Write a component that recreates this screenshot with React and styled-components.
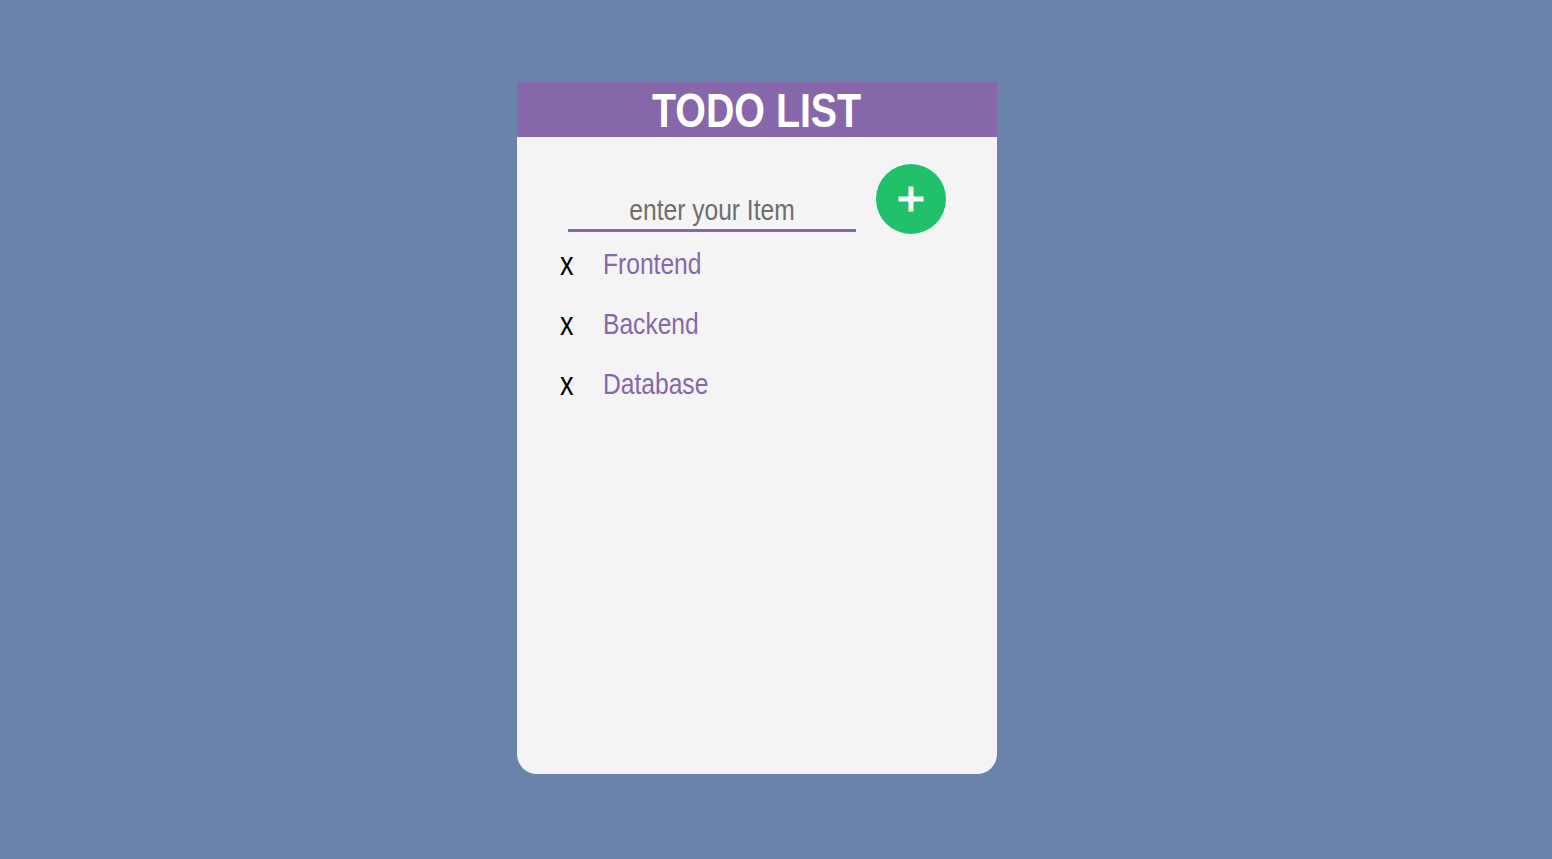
import React, { useState } from "react";
import styled, { createGlobalStyle } from "styled-components";

const NARROW = 0.82;

const Global = createGlobalStyle`
  html, body { margin: 0; padding: 0; }
  body {
    background: #6a83ab;
    font-family: "Liberation Sans", Arial, sans-serif;
    min-height: 859px;
  }
`;

const Page = styled.div`
  display: flex;
  justify-content: center;
  padding: 82px 38px 0 0;
`;

const Card = styled.div`
  width: 480px;
  height: 692px;
  background: #f4f4f4;
  border-radius: 0 0 20px 20px;
  overflow: hidden;
  display: flex;
  flex-direction: column;
`;

const Narrow = styled.span`
  display: inline-block;
  transform: scaleX(${NARROW});
  transform-origin: ${(p) => p.$origin || "left"} center;
  white-space: nowrap;
`;

const Header = styled.h1`
  margin: 0;
  height: 55px;
  background: #8667aa;
  color: #fff;
  font-size: 48px;
  font-weight: 700;
  line-height: 53px;
  text-align: center;
  padding-top: 2px;
  box-sizing: border-box;
`;

const Body = styled.div`
  display: flex;
  flex-direction: column;
  padding: 27px 0 0 43px;
`;

const InputRow = styled.div`
  display: flex;
  align-items: flex-start;
  gap: 20px;
  padding-left: 8px;
`;

const InputBox = styled.div`
  width: 288px;
  height: 39px;
  margin-top: 29px;
  border-bottom: 3px solid #8667aa;
  box-sizing: border-box;
  overflow: visible;
`;

const Input = styled.input`
  display: block;
  width: ${288 / NARROW}px;
  height: 33px;
  border: none;
  background: transparent;
  font-family: "Liberation Sans", Arial, sans-serif;
  font-size: 30px;
  color: #6b6b6b;
  text-align: center;
  outline: none;
  padding: 0;
  transform: scaleX(${NARROW});
  transform-origin: left center;
  &::placeholder { color: #6e6e6e; opacity: 1; }
`;

const AddButton = styled.button`
  width: 70px;
  height: 70px;
  border-radius: 50%;
  border: none;
  background: #21c06b;
  color: #fff;
  display: flex;
  align-items: center;
  justify-content: center;
  padding: 0;
  cursor: pointer;
  flex-shrink: 0;
`;

const List = styled.ul`
  list-style: none;
  margin: 0;
  padding: 0;
  display: flex;
  flex-direction: column;
`;

const Item = styled.li`
  display: flex;
  align-items: center;
  height: 60px;
`;

const Remove = styled.span`
  width: 43px;
  font-size: 33px;
  color: #000;
  cursor: pointer;
`;

const Label = styled.span`
  font-size: 30px;
  color: #8667aa;
`;

export default function App() {
  const [items] = useState(["Frontend", "Backend", "Database"]);
  return (
    <>
      <Global />
      <Page>
        <Card>
          <Header>
            <Narrow $origin="center">TODO LIST</Narrow>
          </Header>
          <Body>
            <InputRow>
              <InputBox>
                <Input placeholder="enter your Item" />
              </InputBox>
              <AddButton aria-label="add">
                <svg width="26" height="26" viewBox="0 0 26 26">
                  <path d="M13 0.5v25M0.5 13h25" stroke="#fff" strokeWidth="5" />
                </svg>
              </AddButton>
            </InputRow>
            <List>
              {items.map((t) => (
                <Item key={t}>
                  <Remove>
                    <Narrow>x</Narrow>
                  </Remove>
                  <Label>
                    <Narrow>{t}</Narrow>
                  </Label>
                </Item>
              ))}
            </List>
          </Body>
        </Card>
      </Page>
    </>
  );
}
